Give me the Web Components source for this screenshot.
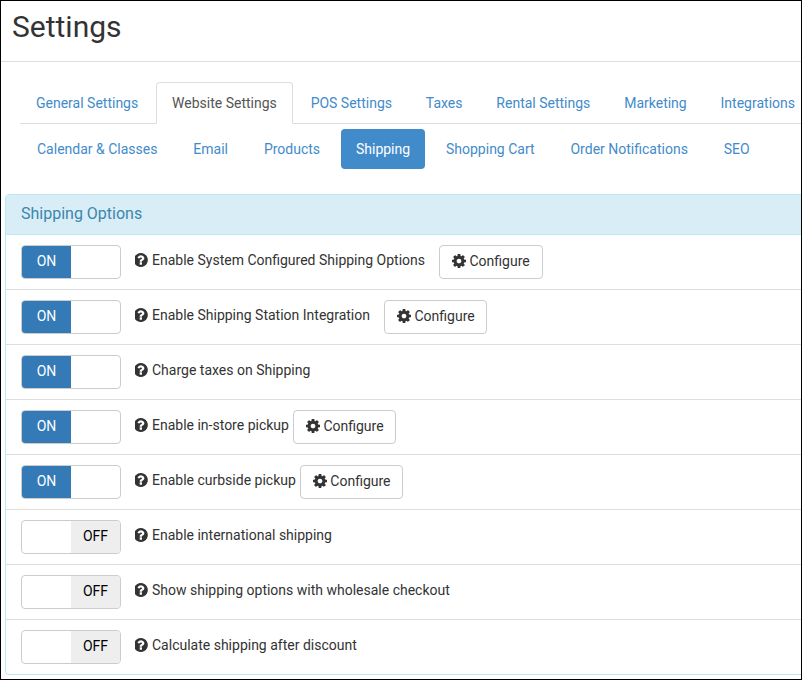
<!DOCTYPE html>
<html lang="en"><head><meta charset="utf-8"><title>Settings</title>
<style>
html,body{margin:0;padding:0;background:#fff;overflow:hidden}
body{font:14px/20px Roboto,"Liberation Sans",sans-serif;color:#333}
</style></head><body>
<settings-page>
  <h-title slot="title">Settings</h-title>
  <nav-tabs slot="tabs">
    <nav-tab>General Settings</nav-tab><nav-tab active>Website Settings</nav-tab><nav-tab>POS Settings</nav-tab><nav-tab>Taxes</nav-tab><nav-tab>Rental Settings</nav-tab><nav-tab>Marketing</nav-tab><nav-tab>Integrations</nav-tab>
  </nav-tabs>
  <nav-pills slot="pills">
    <nav-pill>Calendar &amp; Classes</nav-pill><nav-pill>Email</nav-pill><nav-pill>Products</nav-pill><nav-pill active>Shipping</nav-pill><nav-pill>Shopping Cart</nav-pill><nav-pill>Order Notifications</nav-pill><nav-pill>SEO</nav-pill>
  </nav-pills>
  <options-panel slot="panel" heading="Shipping Options">
    <option-row on label="Enable System Configured Shipping Options" configure gap="14"></option-row>
    <option-row on label="Enable Shipping Station Integration" configure gap="14"></option-row>
    <option-row on label="Charge taxes on Shipping"></option-row>
    <option-row on label="Enable in-store pickup" configure gap="4"></option-row>
    <option-row on label="Enable curbside pickup" configure gap="4"></option-row>
    <option-row label="Enable international shipping"></option-row>
    <option-row label="Show shipping options with wholesale checkout"></option-row>
    <option-row label="Calculate shipping after discount" last></option-row>
  </options-panel>
</settings-page>
<script>
const COG='M1152 896q0-106-75-181t-181-75-181 75-75 181 75 181 181 75 181-75 75-181zm512-109v222q0 12-8 23t-20 13l-185 28q-19 54-39 91 35 50 107 138 10 12 10 25t-9 23q-27 37-99 108t-94 71q-12 0-26-9l-138-108q-44 23-91 38-16 136-29 186-7 28-36 28h-222q-14 0-24.5-8.5t-11.5-21.5l-28-184q-49-16-90-37l-141 107q-10 9-25 9-14 0-25-11-126-114-165-168-7-10-7-23 0-12 8-23 15-21 51-66.5t54-70.5q-27-50-41-99l-183-27q-13-2-21-12.5t-8-23.5v-222q0-12 8-23t19-13l186-28q14-46 39-92-40-57-107-138-10-12-10-24 0-10 9-23 26-36 98.5-107.5t94.5-71.5q13 0 26 10l138 107q44-23 91-38 16-136 29-186 7-28 36-28h222q14 0 24.5 8.5t11.5 21.5l28 184q49 16 90 37l142-107q9-9 24-9 13 0 25 10 129 119 165 170 7 8 7 22 0 12-8 23-15 21-51 66.5t-54 70.5q26 50 41 98l183 28q13 2 21 12.5t8 23.5z';
const HELP='M896 1376v-192q0-14-9-23t-23-9h-192q-14 0-23 9t-9 23v192q0 14 9 23t23 9h192q14 0 23-9t9-23zm256-672q0-88-55.5-163t-138.5-116-170-41q-243 0-371 213-15 24 8 42l132 100q7 6 19 6 16 0 25-12 53-68 86-92 34-24 86-24 48 0 85.5 26t37.5 59q0 38-20 61t-68 45q-63 28-115.5 86.5t-52.5 125.5v36q0 14 9 23t23 9h192q14 0 23-9t9-23q0-19 21.5-49.5t54.5-49.5q32-18 49-28.5t46-35 44.5-48 28-60.5 12.5-81zm384 192q0 209-103 385.5t-279.5 279.5-385.5 103-385.5-103-279.5-279.5-103-385.5 103-385.5 279.5-279.5 385.5-103 385.5 103 279.5 279.5 103 385.5z';
const svg=(d,s)=>`<svg width="${s}" height="${s}" viewBox="128 128 1536 1536" fill="#333" aria-hidden="true"><path d="${d}"/></svg>`;
function def(name,html){
  customElements.define(name,class extends HTMLElement{
    constructor(){super();this.attachShadow({mode:'open'});}
    connectedCallback(){this.shadowRoot.innerHTML=typeof html==='function'?html(this):html;}
  });
}
def('settings-page',`<style>
:host{display:block;box-sizing:border-box;width:802px;height:680px;border:1px solid #000;overflow:hidden;background:#fff}
header{height:60px;border-bottom:1px solid #ddd}
.tabs{padding:20px 0 0 19px}
.pills{padding:5px 0 0 21px}
.panel{padding:25px 0 0 4px}
</style><header><slot name="title"></slot></header>
<div class="tabs"><slot name="tabs"></slot></div>
<div class="pills"><slot name="pills"></slot></div>
<div class="panel"><slot name="panel"></slot></div>`);
def('h-title',`<style>:host{display:block;padding:9px 0 0 11px;font-size:30px;line-height:33px;color:#333;font-weight:400}</style><slot></slot>`);
def('nav-tabs',`<style>:host{display:flex;gap:1.85px;border-bottom:1px solid #ddd;white-space:nowrap;height:41px;width:790px}</style><slot></slot>`);
def('nav-tab',`<style>
:host{display:block;box-sizing:border-box;height:42px;padding:10px 15px;border:1px solid transparent;border-radius:4px 4px 0 0;color:#428bca}
:host([active]){color:#555;background:#fff;border-color:#ddd #ddd #fff}
</style><slot></slot>`);
def('nav-pills',`<style>:host{display:flex;gap:5.9px;white-space:nowrap}</style><slot></slot>`);
def('nav-pill',`<style>
:host{display:block;height:40px;box-sizing:border-box;padding:10px 15px;border-radius:4px;color:#428bca}
:host([active]){color:#fff;background:#428bca}
</style><slot></slot>`);
def('options-panel',h=>`<style>
:host{display:block;width:830px;box-sizing:border-box;border:1px solid #bce8f1;border-radius:4px;background:#fff}
.h{height:40px;box-sizing:border-box;padding:8px 15px;background:#d9edf7;border-bottom:1px solid #bce8f1;color:#3a87ad;font-size:16px;line-height:21px;border-radius:3px 3px 0 0}
</style><div class="h">${h.getAttribute('heading')}</div><slot></slot>`);
def('toggle-switch',h=>{const on=h.hasAttribute('on');return `<style>
:host{display:flex;box-sizing:border-box;width:100px;height:34px;border:1px solid #ccc;border-radius:4px;overflow:hidden;flex:none}
span{width:49px;display:block;text-align:center;line-height:31px;flex:none}
.on{background:#337ab7;color:#fff}.off{background:#eee;color:#000}
</style>${on?'<span class="on">ON</span><span></span>':'<span></span><span class="off">OFF</span>'}`});
def('config-button',`<style>
:host{display:inline-flex;align-items:center;gap:3.5px;box-sizing:border-box;height:34px;padding:0 11.8px 0 12px;border:1px solid #ccc;border-radius:4px;background:#fff;color:#333;white-space:nowrap;flex:none}
svg{display:block;margin-top:-2px}
span{display:block;margin-top:-2px}
</style>${svg(COG,14)}<span><slot></slot></span>`);
def('option-row',h=>`<style>
:host{display:flex;align-items:center;box-sizing:border-box;height:55px;padding:0 15px;border-bottom:1px solid #ddd;white-space:nowrap}
:host([last]){border-bottom:0;height:54px}
.l{display:flex;align-items:center;margin-left:14px;gap:3px;margin-top:-5px}
.l svg{display:block;flex:none;margin-top:1px}
config-button{margin-left:${h.getAttribute('gap')||0}px}
</style><toggle-switch ${h.hasAttribute('on')?'on':''}></toggle-switch><span class="l">${svg(HELP,14)}<span>${h.getAttribute('label')}</span></span>${h.hasAttribute('configure')?'<config-button>Configure</config-button>':''}`);
</script></body></html>
